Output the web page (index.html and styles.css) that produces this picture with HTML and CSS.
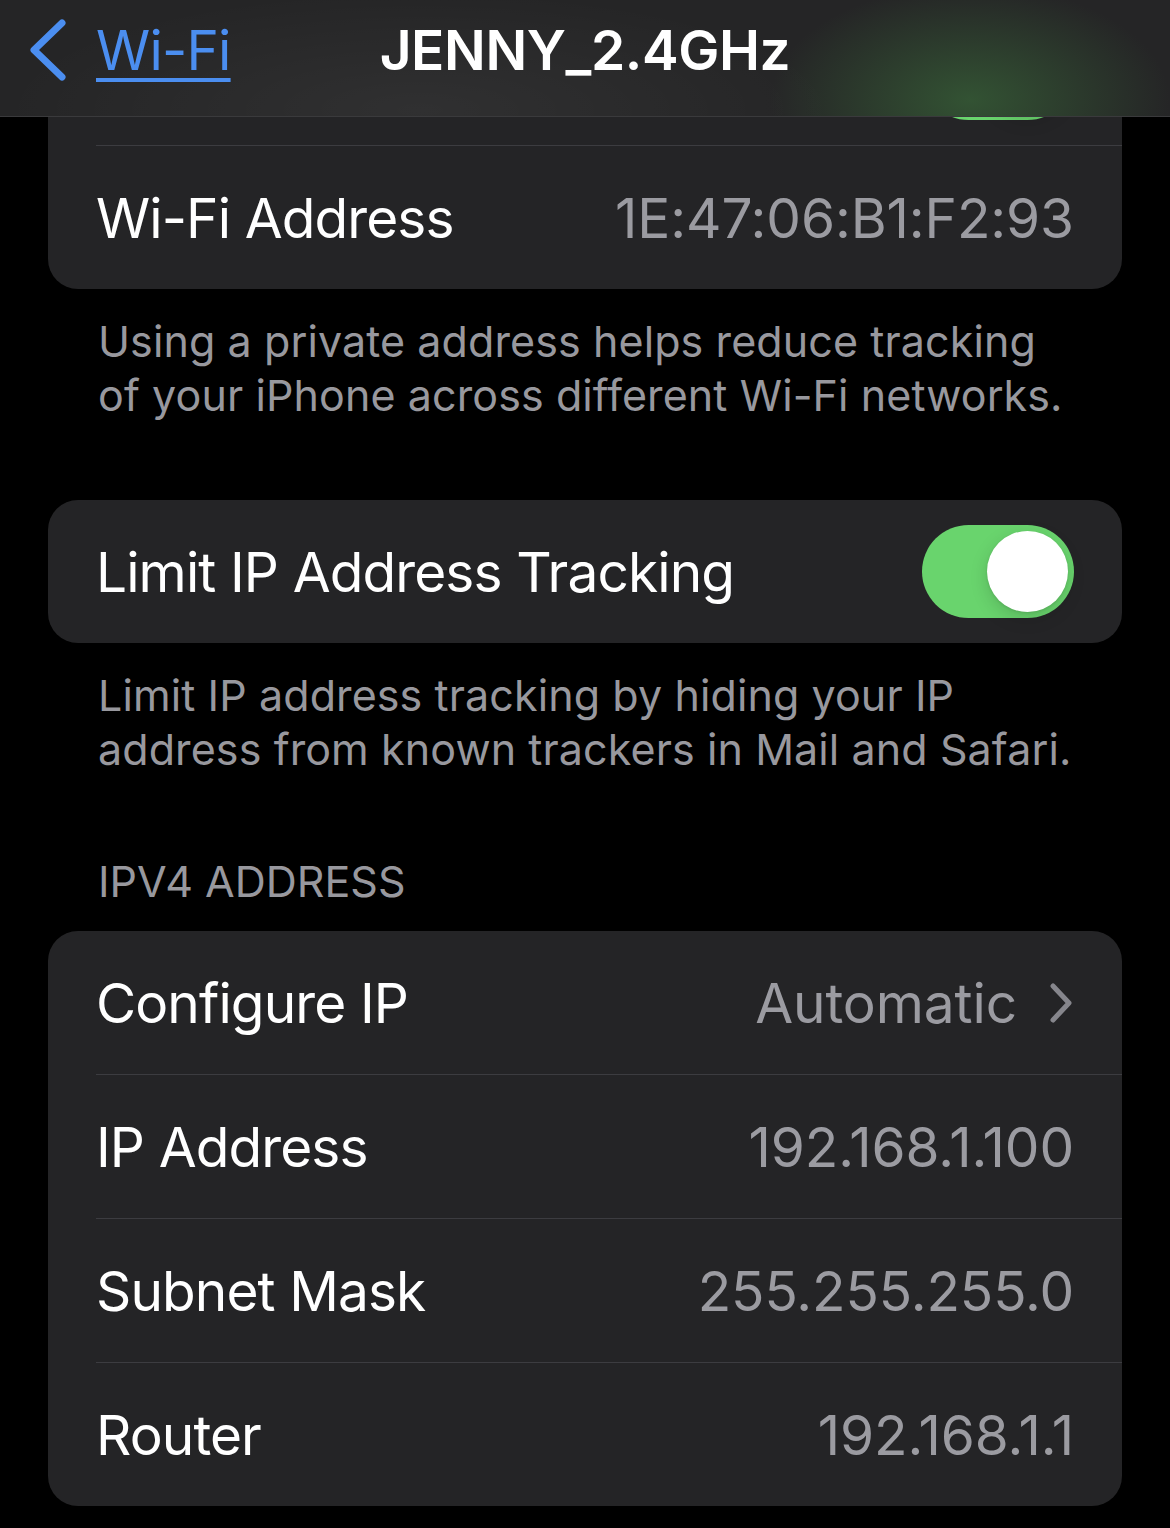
FILE: index.html
```html
<!DOCTYPE html>
<html lang="en">
<head>
  <meta charset="UTF-8">
  <meta name="viewport" content="width=device-width, initial-scale=1.0">
  <title>JENNY_2.4GHz</title>
  <link rel="stylesheet" href="styles.css">
</head>
<body>
  <header class="nav-bar">
    <a class="nav-back" href="#">
      <svg class="nav-back-icon" viewBox="0 0 38 62" width="38" height="62">
        <path d="M34 4 L6 31 L34 58" fill="none" stroke="currentColor" stroke-width="7" stroke-linecap="round" stroke-linejoin="round"/>
      </svg>
      <span class="nav-back-label">Wi-Fi</span>
    </a>
    <h1 class="nav-title">JENNY_2.4GHz</h1>
    <span class="nav-spacer"></span>
  </header>

  <main class="settings">
    <div class="group">
      <!-- scrolled under the nav bar, only the switch edge peeks out -->
      <div class="row row-hidden">
        <span class="row-label"></span>
        <span class="switch on"><span class="switch-knob"></span></span>
      </div>
      <div class="row">
        <span class="row-label">Wi-Fi Address</span>
        <span class="row-value">1E:47:06:B1:F2:93</span>
      </div>
    </div>
    <p class="group-footer">Using a private address helps reduce tracking of your iPhone across different Wi-Fi networks.</p>

    <div class="group">
      <div class="row">
        <span class="row-label">Limit IP Address Tracking</span>
        <span class="switch on"><span class="switch-knob"></span></span>
      </div>
    </div>
    <p class="group-footer">Limit IP address tracking by hiding your IP address from known trackers in Mail and Safari.</p>

    <h2 class="group-header">IPV4 ADDRESS</h2>
    <div class="group">
      <div class="row">
        <span class="row-label">Configure IP</span>
        <span class="row-value">Automatic
          <svg class="row-chevron" viewBox="0 0 26 42" width="26" height="42">
            <path d="M5 4 L21 21 L5 38" fill="none" stroke="currentColor" stroke-width="5" stroke-linecap="round" stroke-linejoin="round"/>
          </svg>
        </span>
      </div>
      <div class="row">
        <span class="row-label">IP Address</span>
        <span class="row-value">192.168.1.100</span>
      </div>
      <div class="row">
        <span class="row-label">Subnet Mask</span>
        <span class="row-value">255.255.255.0</span>
      </div>
      <div class="row">
        <span class="row-label">Router</span>
        <span class="row-value">192.168.1.1</span>
      </div>
    </div>
  </main>
</body>
</html>
```

FILE: styles.css
```css
body {
  margin: 0;
  background: #000;
  color: #fff;
  font-family: Inter, "Noto Sans", sans-serif;
  -webkit-font-smoothing: antialiased;
}

/* navigation bar, sits over the scrolled list */
.nav-bar {
  position: fixed;
  top: 0;
  left: 0;
  right: 0;
  z-index: 10;
  height: 117px;
  box-sizing: border-box;
  padding: 19px 28px 0;
  border-bottom: 1px solid #3a3a3c;
  display: grid;
  grid-template-columns: 1fr auto 1fr;
  align-items: start;
  background:
    radial-gradient(ellipse 200px 115px at 970px 100px, rgba(62, 120, 62, 0.55), rgba(62, 120, 62, 0) 100%),
    radial-gradient(ellipse 420px 120px at 420px 110px, rgba(255, 255, 255, 0.05), rgba(255, 255, 255, 0) 100%),
    #252526;
}
.nav-back {
  justify-self: start;
  display: flex;
  align-items: center;
  gap: 30px;
  color: #4b8ef0;
  text-decoration: none;
}
.nav-back-icon {
  display: block;
}
.nav-back-label {
  font-size: 55px;
  line-height: 62px;
  letter-spacing: -0.8px;
  text-decoration: underline;
  text-decoration-thickness: 4px;
  text-underline-offset: 8px;
}
.nav-title {
  margin: 0;
  font-size: 55px;
  font-weight: 600;
  letter-spacing: -0.4px;
  line-height: 62px;
}

.settings {
  padding: 2px 48px 40px;
}

.group {
  background: #242426;
  border-radius: 30px;
  overflow: hidden;
}
.row {
  height: 143px;
  padding: 0 48px;
  display: flex;
  align-items: center;
  justify-content: space-between;
}
/* inset hairline between rows */
.row + .row {
  border-top: 1px solid transparent;
  background: linear-gradient(#3c3c40, #3c3c40) no-repeat 48px 0 / 100% 1px;
  background-origin: border-box;
}
.row-label {
  font-size: 55px;
  letter-spacing: -0.9px;
}
.row-value {
  font-size: 55px;
  letter-spacing: -0.1px;
  color: #9b9ba1;
  display: flex;
  align-items: center;
  gap: 31px;
}
.row-chevron {
  display: block;
  color: #86868c;
}

.switch {
  width: 152px;
  height: 93px;
  border-radius: 47px;
  background: #39393d;
  display: flex;
  align-items: center;
  padding: 0 6px;
  box-sizing: border-box;
}
.switch.on {
  background: #69d46d;
  justify-content: flex-end;
}
.switch-knob {
  width: 81px;
  height: 81px;
  border-radius: 50%;
  background: #fff;
  box-shadow: 0 6px 18px rgba(0, 0, 0, 0.15), 0 1px 3px rgba(0, 0, 0, 0.1);
}

.group-footer {
  margin: 0;
  padding: 25px 40px 78px 50px;
  font-size: 43px;
  line-height: 54px;
  letter-spacing: 0.1px;
  color: #98989e;
}
.group-header {
  margin: 0;
  padding: 0 48px 23px 50px;
  font-size: 43px;
  line-height: 54px;
  font-weight: 400;
  letter-spacing: 0;
  color: #98989e;
}
```
